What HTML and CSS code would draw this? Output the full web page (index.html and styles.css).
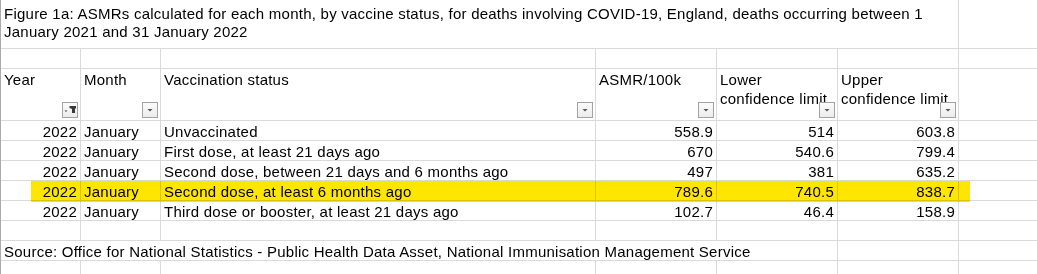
FILE: index.html
```html
<!DOCTYPE html>
<html lang="en">
<head>
<meta charset="utf-8">
<title>Figure 1a: ASMRs by vaccine status</title>
<link rel="stylesheet" href="styles.css">
</head>
<body>
<div class="sheet">
  <div class="cell title">Figure 1a: ASMRs calculated for each month, by vaccine status, for deaths involving COVID-19, England, deaths occurring between 1 January 2021 and 31 January 2022</div>
  <div class="cell last"></div>

  <div class="cell"></div><div class="cell"></div><div class="cell"></div><div class="cell"></div><div class="cell"></div><div class="cell"></div><div class="cell last"></div>

  <div class="cell hd">Year<span class="fbtn"><svg viewBox="0 0 14 14" width="14" height="14"><polygon points="1.5,7.5 4.5,7.5 3,9" fill="#444"/><polygon points="6.5,3 13,3 13,5 12,6 12,10 9,10 9,6 6.5,5" fill="#3a3a3a"/></svg></span></div>
  <div class="cell hd">Month<span class="fbtn"><svg viewBox="0 0 14 14" width="14" height="14"><polygon points="4.5,6 9.5,6 7,8.5" fill="#555"/></svg></span></div>
  <div class="cell hd">Vaccination status<span class="fbtn"><svg viewBox="0 0 14 14" width="14" height="14"><polygon points="4.5,6 9.5,6 7,8.5" fill="#555"/></svg></span></div>
  <div class="cell hd">ASMR/100k<span class="fbtn"><svg viewBox="0 0 14 14" width="14" height="14"><polygon points="4.5,6 9.5,6 7,8.5" fill="#555"/></svg></span></div>
  <div class="cell hd">Lower confidence limit<span class="fbtn"><svg viewBox="0 0 14 14" width="14" height="14"><polygon points="4.5,6 9.5,6 7,8.5" fill="#555"/></svg></span></div>
  <div class="cell hd">Upper confidence limit<span class="fbtn"><svg viewBox="0 0 14 14" width="14" height="14"><polygon points="4.5,6 9.5,6 7,8.5" fill="#555"/></svg></span></div>
  <div class="cell last"></div>

  <div class="cell num">2022</div><div class="cell">January</div><div class="cell">Unvaccinated</div><div class="cell num">558.9</div><div class="cell num">514</div><div class="cell num">603.8</div><div class="cell last"></div>
  <div class="cell num">2022</div><div class="cell">January</div><div class="cell">First dose, at least 21 days ago</div><div class="cell num">670</div><div class="cell num">540.6</div><div class="cell num">799.4</div><div class="cell last"></div>
  <div class="cell num">2022</div><div class="cell">January</div><div class="cell">Second dose, between 21 days and 6 months ago</div><div class="cell num">497</div><div class="cell num">381</div><div class="cell num">635.2</div><div class="cell last"></div>
  <div class="cell num">2022</div><div class="cell">January</div><div class="cell">Second dose, at least 6 months ago</div><div class="cell num">789.6</div><div class="cell num">740.5</div><div class="cell num">838.7</div><div class="cell last"></div>
  <div class="cell num">2022</div><div class="cell">January</div><div class="cell">Third dose or booster, at least 21 days ago</div><div class="cell num">102.7</div><div class="cell num">46.4</div><div class="cell num">158.9</div><div class="cell last"></div>

  <div class="cell"></div><div class="cell"></div><div class="cell"></div><div class="cell"></div><div class="cell"></div><div class="cell"></div><div class="cell last"></div>

  <div class="cell source">Source: Office for National Statistics - Public Health Data Asset, National Immunisation Management Service</div>
  <div class="cell"></div><div class="cell last"></div>

  <div class="cell"></div><div class="cell"></div><div class="cell"></div><div class="cell"></div><div class="cell"></div><div class="cell"></div><div class="cell last"></div>

  <div class="highlight"></div>
</div>
</body>
</html>
```

FILE: styles.css
```css
html, body {
  margin: 0;
  padding: 0;
  background: #ffffff;
  overflow: hidden;
}

.sheet {
  position: relative;
  display: grid;
  grid-template-columns: 80px 80px 435px 121px 121px 121px 1fr;
  grid-template-rows: 49px 20px 52px repeat(8, 20px);
  border-left: 1px solid #ababab;
  width: 1036px;
  font-family: "Liberation Sans", Arial, sans-serif;
  font-size: 15px;
  letter-spacing: 0.24px;
  color: #000000;
}

.cell {
  box-sizing: border-box;
  border-right: 1px solid #dadada;
  border-bottom: 1px solid #dadada;
  padding: 2px 3px 0;
  line-height: 18px;
  white-space: nowrap;
  overflow: visible;
}

.cell.last {
  border-right: none;
}

.title {
  grid-column: 1 / 7;
  white-space: normal;
  padding: 5px 3px 0 3px;
  line-height: 18px;
}

.hd {
  position: relative;
  white-space: normal;
  padding: 1px 3px 0;
  line-height: 19px;
}

.num {
  text-align: right;
}

.source {
  grid-column: 1 / 6;
}

.fbtn {
  position: absolute;
  right: 2px;
  bottom: 2px;
  width: 16px;
  height: 16px;
  box-sizing: border-box;
  border: 1px solid #a3a3a3;
  background: linear-gradient(#fbfbfb, #ececec);
  display: block;
}

.fbtn svg {
  display: block;
}

.highlight {
  position: absolute;
  left: 30px;
  top: 181px;
  width: 939px;
  height: 21px;
  background: #ffe600;
  mix-blend-mode: multiply;
  pointer-events: none;
}
```
